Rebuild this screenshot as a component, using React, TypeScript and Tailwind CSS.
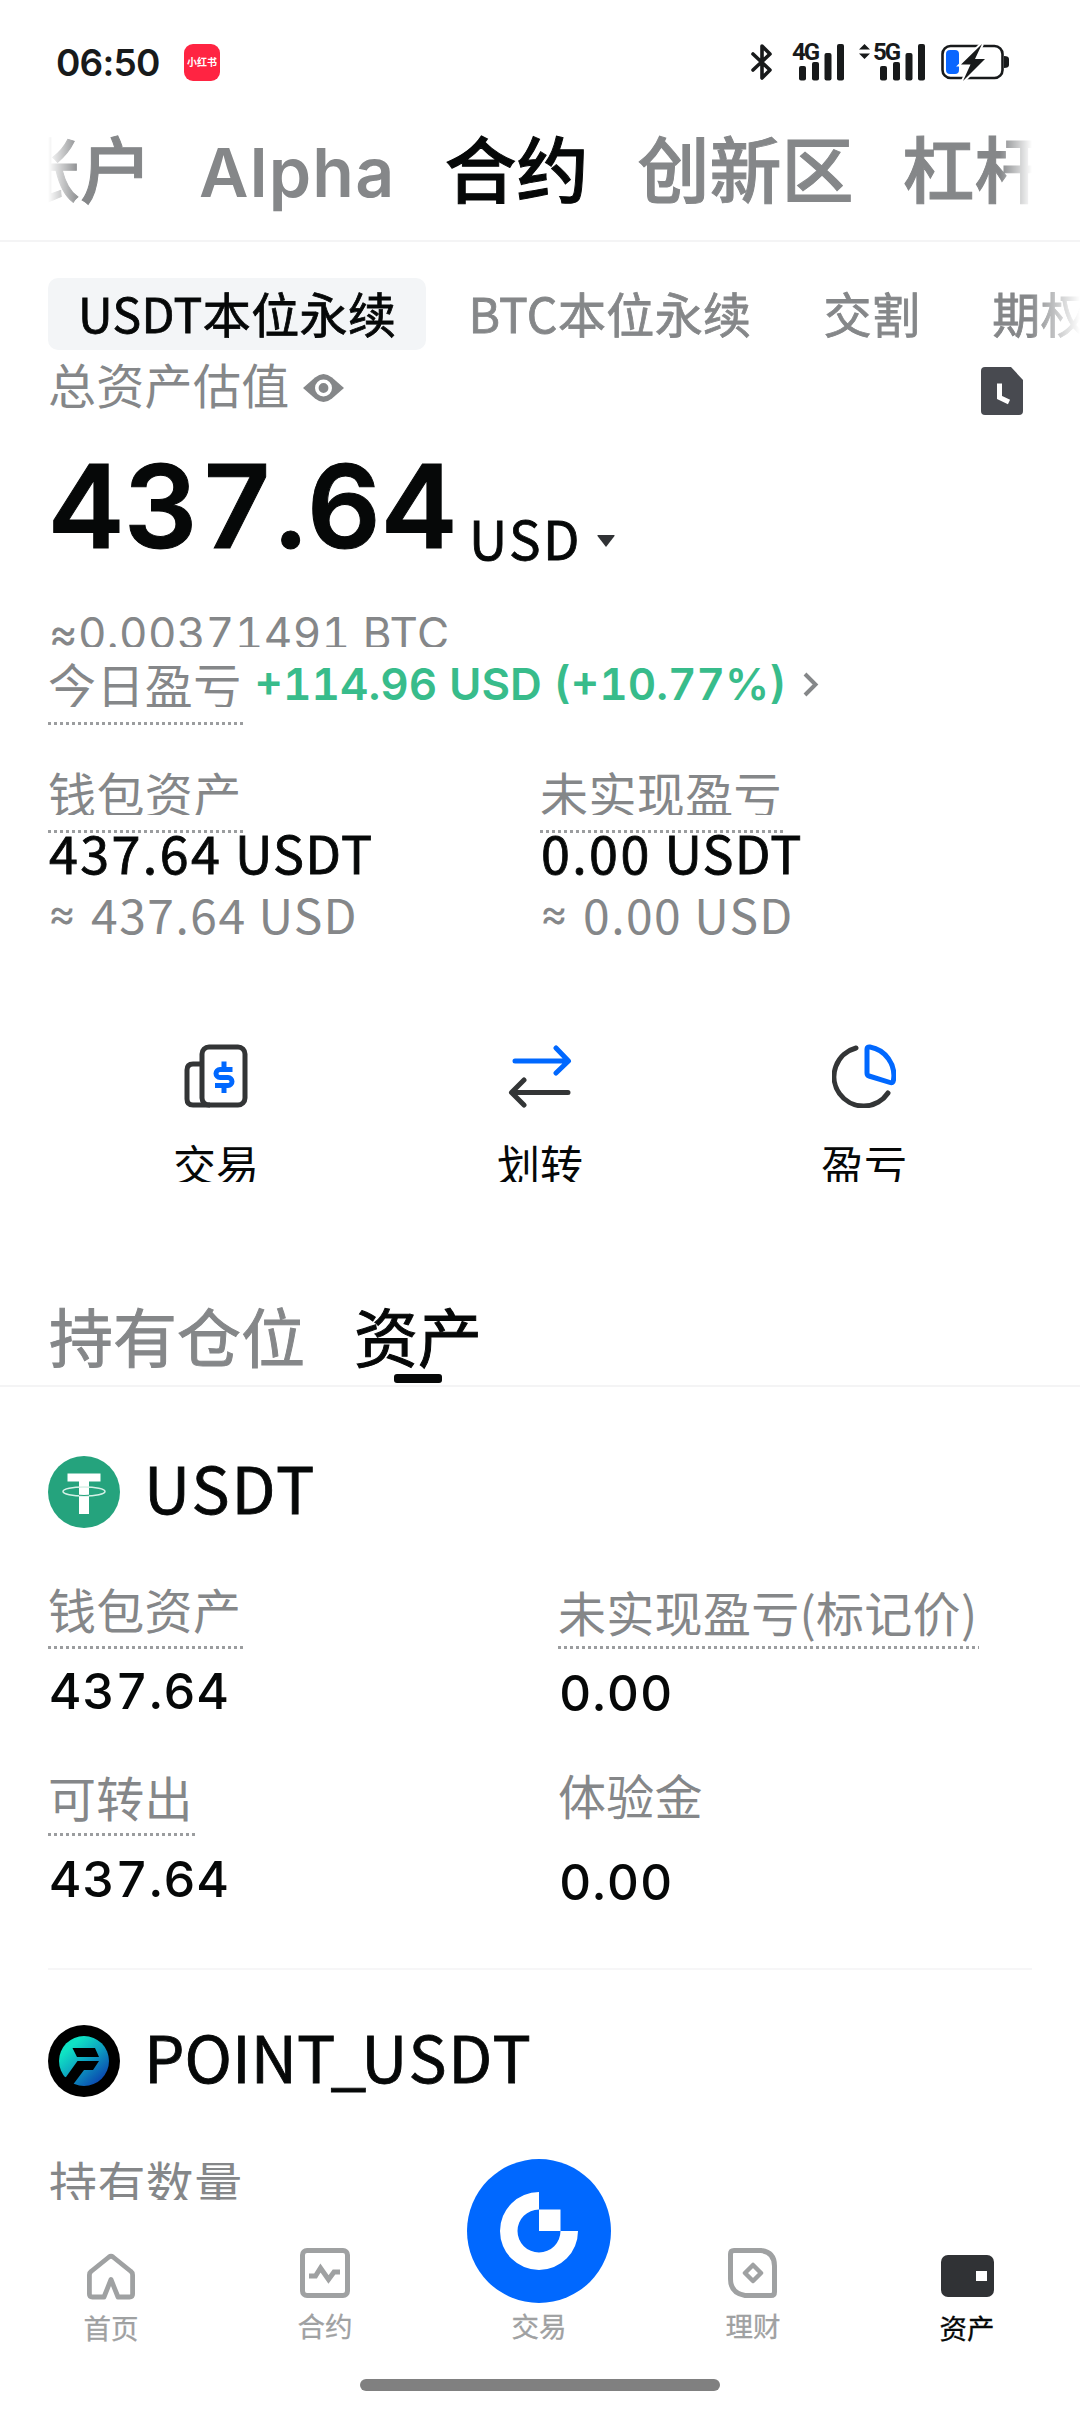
import type { ReactNode } from "react";

const accountTabs = ["账户", "Alpha", "合约", "创新区", "杠杆"];
const contractTabs = ["USDT本位永续", "BTC本位永续", "交割", "期权"];

function SignalBars() {
  return (
    <svg width="46" height="37" viewBox="0 0 46 37" fill="#181a1b">
      <rect x="0" y="22" width="7" height="14.5" rx="2" />
      <rect x="13" y="18" width="7" height="18.5" rx="2" />
      <rect x="25.5" y="9" width="7" height="27.5" rx="2" />
      <rect x="38" y="0" width="7" height="36.5" rx="2" />
    </svg>
  );
}

function StatusBar() {
  return (
    <div className="flex h-[124px] shrink-0 items-center justify-between pr-[71px] pl-[56px] text-[#181a1b]">
      <div className="flex items-center">
        <span className="w-[128px] font-[Inter] text-[37px] leading-[37px] font-semibold tracking-[-0.8px]">
          06:50
        </span>
        <span className="flex h-[37px] w-[36px] items-center justify-center rounded-[9px] bg-[#ff2442] text-[10px] leading-[12px] font-bold whitespace-nowrap text-white">
          小红书
        </span>
      </div>
      <div className="flex items-center">
        <svg
          width="24"
          height="38"
          viewBox="0 0 24 38"
          fill="none"
          stroke="currentColor"
          strokeWidth="3.6"
          strokeLinejoin="round"
          strokeLinecap="round"
        >
          <path d="M3 11 20 27 12 35V3l8 8L3 27" />
        </svg>
        <div className="relative ml-[25px] h-[37px]">
          <SignalBars />
          <span className="absolute top-[-1px] left-[-7px] font-['Roboto'] text-[24px] leading-[18px] font-bold tracking-[-2px]">
            4G
          </span>
        </div>
        <div className="relative ml-[35px] h-[37px]">
          <SignalBars />
          <svg
            className="absolute top-0 left-[-21px]"
            width="11"
            height="15"
            viewBox="0 0 11 15"
            fill="currentColor"
          >
            <path d="M5.5 0 11 5.5H0zM5.5 15 0 9.500H11z" />
          </svg>
          <span className="absolute top-[-1px] left-[-7px] font-['Roboto'] text-[24px] leading-[18px] font-bold tracking-[-2px]">
            5G
          </span>
        </div>
        <svg className="ml-[15px]" width="68" height="40" viewBox="0 0 68 40">
          <rect
            x="1.500"
            y="4"
            width="60"
            height="32"
            rx="8"
            fill="none"
            stroke="#181a1b"
            strokeWidth="2.600"
          />
          <path d="M63 14q5 0 5 3v6q0 3-5 3z" fill="#181a1b" />
          <rect x="5" y="8" width="13" height="24" rx="4" fill="#0a66ff" />
          <path
            d="M41 2 20 22.500H29.500L22 39 44 17H34z"
            fill="#181a1b"
            stroke="#fff"
            strokeWidth="4"
            paintOrder="stroke"
          />
        </svg>
      </div>
    </div>
  );
}

function DottedLine({ className = "" }: { className?: string }) {
  return (
    <div
      className={`h-[3px] bg-[repeating-linear-gradient(90deg,#9b9d9f_0_3px,transparent_3px_6px)] ${className}`}
    />
  );
}

function WalletColumn({
  label,
  amount,
  approx,
}: {
  label: string;
  amount: string;
  approx: string;
}) {
  return (
    <div className="w-[492px]">
      <div className="flex w-fit flex-col">
        <span className="h-[47px] overflow-hidden pr-[2px] text-[48px] leading-[48px] tracking-[0.400px] text-[#858789]">
          {label}
        </span>
        <DottedLine className="mt-[15px]" />
      </div>
      <p className="h-[38px] pl-px text-[52px] leading-[38px] tracking-[1.200px] text-[#060808] [-webkit-text-stroke:0.8px]">
        <span className="tracking-[2.400px]">{amount}</span> USDT
      </p>
      <p className="mt-[18px] flex h-[48px] text-[48px] leading-[48px] tracking-[1.200px] whitespace-pre text-[#858789]">
        <span className="w-[43px] font-[Inter] text-[42px] leading-[48px]">≈</span>
        <span className="tracking-[1.500px]">{approx}</span> USD
      </p>
    </div>
  );
}

function Action({ label, children }: { label: string; children: ReactNode }) {
  return (
    <button type="button" className="flex w-[324px] flex-col items-center">
      {children}
      <span className="mt-[33px] h-[41px] overflow-hidden text-[43px] leading-[44px] text-[#060808]">
        {label}
      </span>
    </button>
  );
}

function Quantity({ value, className }: { value: string; className: string }) {
  return (
    <p
      className={`pl-px font-[Inter] text-[50px] leading-[50px] font-medium tracking-[0.900px] text-[#060808] tabular-nums [font-kerning:none] ${className}`}
    >
      {value}
    </p>
  );
}

function FieldLabel({
  children,
  gap,
}: {
  children: ReactNode;
  gap?: string;
}) {
  return (
    <div className="flex w-fit flex-col">
      <span className="pr-[2px] text-[48px] leading-[48px] tracking-[0.300px] whitespace-nowrap text-[#858789]">
        {children}
      </span>
      {gap && <DottedLine className={gap} />}
    </div>
  );
}

function NavItem({
  label,
  active,
  children,
}: {
  label: string;
  active?: boolean;
  children: ReactNode;
}) {
  return (
    <button type="button" className="flex flex-col items-center">
      {children}
      <span
        className={`text-[27.500px] leading-[28px] [-webkit-text-stroke:0.3px] ${
          active ? "text-[#060808]" : "text-[#9fa1a2]"
        }`}
      >
        {label}
      </span>
    </button>
  );
}

function BottomNav() {
  return (
    <nav className="relative h-[212px] shrink-0 bg-white">
      <div className="grid grid-cols-5 pr-[6px] pl-[4px]">
        <NavItem label="首页">
          <svg
            className="mt-[51px] mb-[12px]"
            width="50"
            height="50"
            viewBox="0 0 50 50"
            fill="none"
            stroke="#9fa1a2"
            strokeWidth="4.800"
            strokeLinejoin="round"
          >
            <path d="M5 20.500Q3.400 21.700 3.400 24V43Q3.400 46 6.400 46H18L25 28.500 32 46H43.600Q46.600 46 46.600 43V24Q46.600 21.700 45 20.500L27 6Q25 4.500 23 6z" />
          </svg>
        </NavItem>
        <NavItem label="合约">
          <svg
            className="mt-[48px] mb-[13px]"
            width="50"
            height="50"
            viewBox="0 0 50 50"
            fill="none"
            stroke="#9fa1a2"
            strokeWidth="5"
          >
            <rect x="2.500" y="2.500" width="45" height="45" rx="4.500" />
            <path d="M9 28h6.500l5-8 8 11.500 5.500-7.500h6" />
          </svg>
        </NavItem>
        <NavItem label="交易">
          <svg
            className="mt-[-41px] mb-[8px]"
            width="144"
            height="144"
            viewBox="0 0 144 144"
          >
            <circle cx="72" cy="72" r="72" fill="#0068ff" />
            <path
              d="M72 33a39 39 0 1 0 39 39H93.500A21.500 21.500 0 1 1 72 50.500z"
              fill="#fff"
            />
            <path d="M72 50.500h21.500V72H72z" fill="#fff" />
          </svg>
        </NavItem>
        <NavItem label="理财">
          <svg
            className="mt-[48px] mb-[13px]"
            width="50"
            height="50"
            viewBox="0 0 50 50"
            fill="none"
            stroke="#9fa1a2"
            strokeWidth="5"
            strokeLinejoin="round"
          >
            <path d="M6 2.500H33Q46.500 4 46.500 18V44Q46.500 47.500 43 47.500H17Q2.500 45 2.500 31V6Q2.500 2.500 6 2.500z" />
            <path d="M25 17l8 8-8 8-8-8z" strokeWidth="4.500" />
          </svg>
        </NavItem>
        <NavItem label="资产" active>
          <span className="mt-[55px] mb-[16px] flex h-[42px] w-[53px] items-center justify-end rounded-[7px] bg-[#303235] pr-[7px]">
            <span className="h-[10px] w-[11px] bg-white" />
          </span>
        </NavItem>
      </div>
      <div className="absolute top-[179px] left-[360px] h-[12px] w-[360px] rounded-full bg-[#808080]" />
    </nav>
  );
}

export default function App() {
  return (
    <div className="flex h-[2412px] w-[1080px] flex-col overflow-hidden bg-white font-['Noto_Sans_CJK_SC',sans-serif]">
      <StatusBar />

      {/* account type tabs, scrolled a little to the left */}
      <div className="h-[118px] shrink-0 border-b-2 border-[#f4f4f5] px-[48px] pt-[6px]">
        <div className="flex items-baseline gap-[49px] overflow-hidden pb-[12px] whitespace-nowrap [mask-image:linear-gradient(90deg,transparent,#000_32px,#000_calc(100%-32px),transparent)]">
          {accountTabs.map((tab, i) => (
            <span
              key={tab}
              className={`shrink-0 ${i === 0 ? "-ml-[40px]" : ""} ${
                tab === "Alpha"
                  ? "-ml-[2px] font-[Inter] text-[68px] leading-[72px] font-semibold tracking-[1.200px]"
                  : "text-[72px] leading-[72px] font-medium [-webkit-text-stroke:1px]"
              } ${tab === "合约" ? "text-[#060808]" : "text-[#858789]"}`}
            >
              {tab}
            </span>
          ))}
        </div>
      </div>

      <div className="mt-[36px] flex h-[72px] shrink-0 gap-[12px] overflow-hidden pl-[48px] whitespace-nowrap [mask-image:linear-gradient(90deg,#000_calc(100%-50px),transparent)]">
        {contractTabs.map((tab, i) => (
          <span
            key={tab}
            className={`shrink-0 rounded-[10px] px-[30px] text-[48px] leading-[68px] tracking-[0.400px] [-webkit-text-stroke:0.8px] ${
              i === 0 ? "bg-[#f3f5f7] text-[#060808]" : "text-[#858789]"
            }`}
          >
            {tab}
          </span>
        ))}
      </div>

      {/* balance */}
      <section className="shrink-0 px-[48px] pt-[9px]">
        <div className="flex h-[63px] items-center">
          <span className="self-start text-[48px] leading-[48px] tracking-[0.300px] text-[#858789]">
            总资产估值
          </span>
          <svg
            className="mt-[-6px] ml-[13px]"
            width="41"
            height="28"
            viewBox="0 0 41 28"
          >
            <path
              d="M0 14 12 3.500Q20.500-3.500 29 3.500L41 14 29 24.500Q20.500 31.500 12 24.500z"
              fill="#858789"
            />
            <circle cx="20.500" cy="14" r="6.700" fill="#858789" stroke="#fff" strokeWidth="3.600" />
          </svg>
          <svg
            className="mr-[9px] ml-auto"
            width="42"
            height="48"
            viewBox="0 0 42 48"
          >
            <path
              d="M4 0H30L42 13V44Q42 48 38 48H4Q0 48 0 44V4Q0 0 4 0z"
              fill="#484a50"
            />
            <path d="M18.500 16.500V30.500L28 35" fill="none" stroke="#fff" strokeWidth="5" />
          </svg>
        </div>

        <div className="mt-[26px] flex h-[116px]">
          <span className="w-[421px] pl-px font-[Inter] text-[115.500px] leading-[116px] font-semibold tracking-[0.600px] text-[#060808] tabular-nums [-webkit-text-stroke:1px] [font-kerning:none]">
            437.64
          </span>
          <span className="mt-[63px] text-[53px] leading-[52px] tracking-[2.400px] text-[#060808] [-webkit-text-stroke:0.8px]">
            USD
          </span>
          <svg
            className="mt-[87px] ml-[15px]"
            width="18"
            height="12"
            viewBox="0 0 18 12"
          >
            <path d="M1 0h16q1 0 .5 1L9 12 .5 1Q0 0 1 0z" fill="#303235" />
          </svg>
        </div>

        <p className="mt-[46px] h-[37px] overflow-hidden pl-px font-[Inter] text-[44px] leading-[46px] tracking-[0.400px] text-[#858789] tabular-nums">
          ≈0.00371491 BTC
        </p>

        <div className="flex h-[78px] pt-[12px]">
          <div>
            <span className="block h-[48px] overflow-hidden pr-[2px] text-[48px] leading-[48px] tracking-[0.400px] text-[#858789]">
              今日盈亏
            </span>
            <DottedLine className="mt-[15px]" />
          </div>
          <span className="ml-[11px] font-[Inter] text-[44px] leading-[50px] font-semibold text-[#38bc8b] tabular-nums">
            +114.96 USD (+10.77%)
          </span>
          <svg
            className="mt-[13px] ml-[17px]"
            width="16"
            height="25"
            viewBox="0 0 16 25"
            fill="none"
            stroke="#858789"
            strokeWidth="4"
          >
            <path d="M2 2 12.500 12.500 2 23" />
          </svg>
        </div>
      </section>

      <section className="flex shrink-0 px-[48px] pt-[43px]">
        <WalletColumn label="钱包资产" amount="437.64" approx="437.64" />
        <WalletColumn label="未实现盈亏" amount="0.00" approx="0.00" />
      </section>

      <section className="mt-[107px] flex shrink-0 px-[54px]">
        <Action label="交易">
          <svg width="64" height="64" viewBox="0 0 64 64" fill="none" stroke="#333536" strokeWidth="5">
            <rect x="18" y="3" width="43" height="58" rx="7" />
            <path d="M18 20H9Q3 20 3 26V55Q3 61 9 61H26" />
            <path
              d="M40 17.500V25M40 41V49M48.500 25.500H36a4 4 0 0 0 0 8H44a4 4 0 0 1 0 8H31"
              stroke="#0068ff"
            />
          </svg>
        </Action>
        <Action label="划转">
          <svg
            width="64"
            height="64"
            viewBox="0 0 64 64"
            fill="none"
            strokeWidth="5"
            strokeLinecap="round"
            strokeLinejoin="round"
          >
            <path d="M7 17H60M48 4 60.500 17 48 29" stroke="#0068ff" />
            <path d="M60 48.500H4M16 36 3.500 48.500 16 61" stroke="#333536" />
          </svg>
        </Action>
        <Action label="盈亏">
          <svg
            width="64"
            height="64"
            viewBox="0 0 64 64"
            fill="none"
            strokeWidth="5"
            strokeLinecap="round"
            strokeLinejoin="round"
          >
            <path d="M24 4A29.500 29.500 0 1 0 56 49" stroke="#333536" />
            <path
              d="M35 5Q35 2.500 38 3A29 29 0 0 1 61.500 36Q61 39.500 58 38.500L37 32Q35 31.500 35 29z"
              stroke="#0068ff"
            />
          </svg>
        </Action>
      </section>

      {/* positions / assets */}
      <div className="mt-[120px] flex h-[85px] shrink-0 gap-[49px] border-b-2 border-[#f4f4f5] pr-[48px] pl-[49px] text-[64px] leading-[64px] [-webkit-text-stroke:1px]">
        <span className="text-[#858789]">持有仓位</span>
        <div className="flex flex-col items-center text-[#060808]">
          资产
          <span className="mt-[8px] h-[9px] w-[48px] rounded-[3px] bg-[#060808]" />
        </div>
      </div>

      <section className="shrink-0 px-[48px]">
        <div className="mt-[69px] flex h-[72px] gap-[24px]">
          <svg width="72" height="72" viewBox="0 0 72 72">
            <circle cx="36" cy="36" r="36" fill="#25a37d" />
            <path d="M19.500 17.500h33v8H41V58H31V25.500H19.500z" fill="#fff" />
            <ellipse cx="36" cy="35.500" rx="21" ry="4.500" fill="none" stroke="#d5f0e6" strokeWidth="1.500" />
            <path d="M31 39.200q5 .6 10 0" stroke="#25a37d" strokeWidth="1" fill="none" />
          </svg>
          <span className="text-[64px] leading-[60px] tracking-[2px] text-[#060808] [-webkit-text-stroke:0.8px]">
            USDT
          </span>
        </div>

        <div className="mt-[56px] flex h-[386px] border-b-2 border-[#f6f6f7]">
          <div className="w-[510px]">
            <FieldLabel gap="mt-[14px]">钱包资产</FieldLabel>
            <Quantity value="437.64" className="mt-[17px]" />
            <div className="mt-[56px]">
              <FieldLabel gap="mt-[13px]">可转出</FieldLabel>
            </div>
            <Quantity value="437.64" className="mt-[18px]" />
          </div>
          <div className="pt-[3px]">
            <FieldLabel gap="mt-[11px]">未实现盈亏(标记价)</FieldLabel>
            <Quantity value="0.00" className="mt-[19px]" />
            <div className="mt-[52px]">
              <FieldLabel>体验金</FieldLabel>
            </div>
            <Quantity value="0.00" className="mt-[39px]" />
          </div>
        </div>

        <div className="mt-[55px] flex h-[72px] gap-[24px]">
          <svg width="72" height="72" viewBox="0 0 72 72">
            <defs>
              <linearGradient id="point" x1="0.2" y1="0.1" x2="0.9" y2="0.9">
                <stop offset="0.1" stopColor="#0fe3c4" />
                <stop offset="0.500" stopColor="#0d9fc0" />
                <stop offset="1" stopColor="#0a3fae" />
              </linearGradient>
            </defs>
            <circle cx="36" cy="36" r="36" fill="#000" />
            <circle cx="36" cy="36" r="25" fill="url(#point)" />
            <path
              d="M24.500 23H47L51 32H29zM29.500 36H51L45 45H36L24 61 12 53 18 52z"
              fill="#000"
            />
          </svg>
          <span className="text-[64px] leading-[60px] text-[#060808] [-webkit-text-stroke:0.8px]">
            POINT
            <span className="-ml-[5px] tracking-[-5px]">_</span>
            <span className="tracking-[1.800px]">USDT</span>
          </span>
        </div>
        <div className="mt-[60px] h-[43px] overflow-hidden pl-px text-[48px] leading-[48px] tracking-[0.400px] text-[#858789]">
          持有数量
        </div>
      </section>

      <BottomNav />
    </div>
  );
}
